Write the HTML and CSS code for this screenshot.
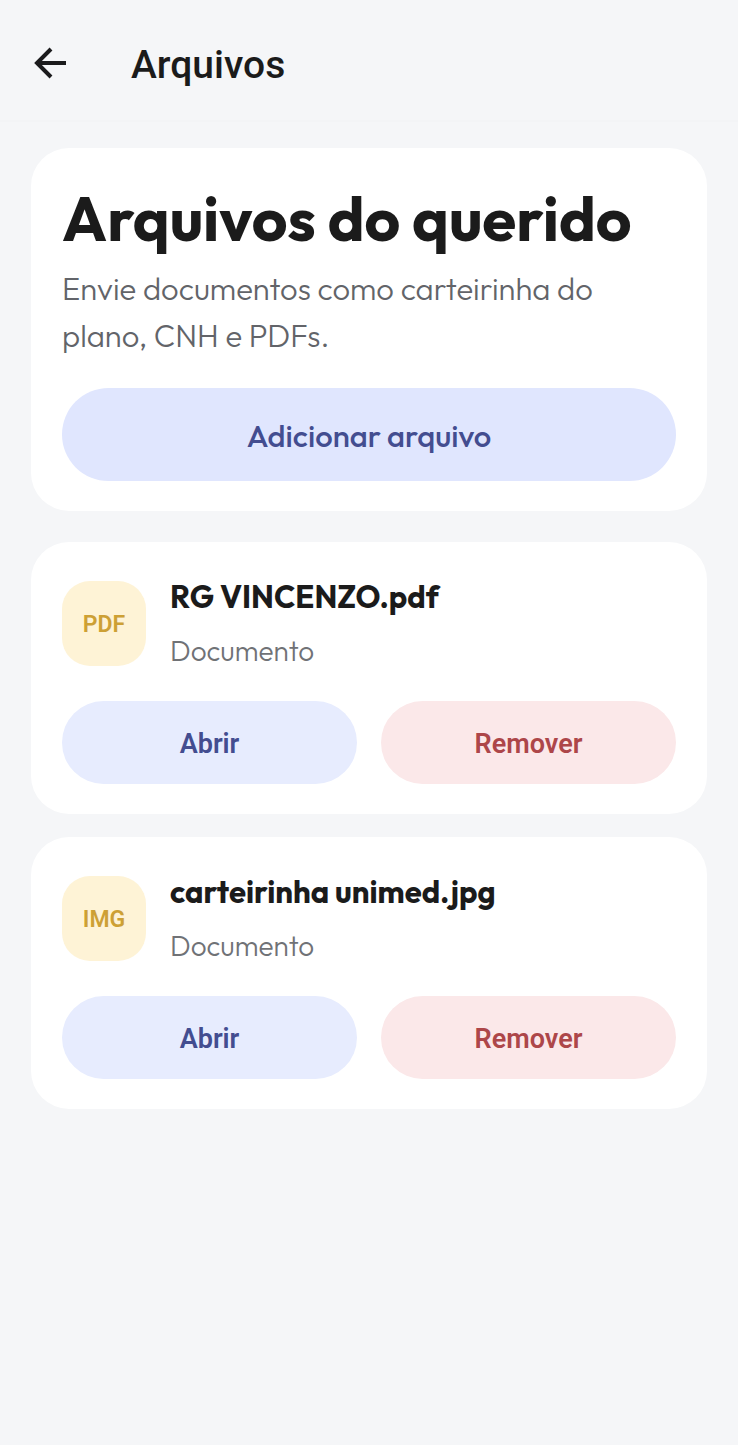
FILE: index.html
```html
<!DOCTYPE html>
<html lang="pt-BR">
<head>
    <meta charset="utf-8">
    <meta name="viewport" content="width=device-width, initial-scale=1">
    <title>Arquivos</title>
    <link rel="stylesheet" href="styles.css">
</head>

<body>
    <header class="topbar">
        <button class="back" type="button" aria-label="Voltar">
            <svg width="34" height="34" viewBox="0 0 34 34" fill="none" stroke="#1b1b1d" stroke-width="4">
                <path d="M32 16H4M17 2L3 16L17 30"/>
            </svg>
        </button>
        <div class="topbar-title">Arquivos</div>
    </header>

    <main>
        <section class="card intro">
            <h1>Arquivos do querido</h1>
            <p>Envie documentos como carteirinha do plano, CNH e PDFs.</p>
            <button class="button add" type="button">Adicionar arquivo</button>
        </section>

        <section class="card">
            <div class="file">
                <div class="badge">PDF</div>
                <div class="file-info">
                    <h2>RG VINCENZO.pdf</h2>
                    <div class="file-type">Documento</div>
                </div>
            </div>
            <div class="actions">
                <button class="button open" type="button">Abrir</button>
                <button class="button remove" type="button">Remover</button>
            </div>
        </section>

        <section class="card">
            <div class="file">
                <div class="badge">IMG</div>
                <div class="file-info">
                    <h2>carteirinha unimed.jpg</h2>
                    <div class="file-type">Documento</div>
                </div>
            </div>
            <div class="actions">
                <button class="button open" type="button">Abrir</button>
                <button class="button remove" type="button">Remover</button>
            </div>
        </section>
    </main>
</body>
</html>
```
FILE: styles.css
```css
* {
    box-sizing: border-box;
}
body {
    margin: 0;
    background-color: #f5f6f8;
    font-family: Outfit, Lato, sans-serif;
    color: #1b1b1b;
}
h1, h2, p {
    margin: 0;
}
.topbar {
    display: flex;
    align-items: center;
    gap: 63px;
    height: 122px;
    padding: 8px 34px 0;
    border-bottom: 2px solid #f3f4f6;
}
.back {
    display: flex;
    padding: 0;
    border: none;
    background: none;
    cursor: pointer;
}
.topbar-title {
    font-family: Roboto, sans-serif;
    font-size: 39px;
    font-weight: 500;
    line-height: 48px;
    padding-top: 2px;
}
main {
    display: flex;
    flex-direction: column;
    gap: 23px;
    padding: 26px 31px;
}
.card {
    padding: 31px 31px 30px;
    border-radius: 38px;
    background-color: white;
}
.intro {
    margin-bottom: 8px;
}
.intro h1 {
    font-size: 62px;
    font-weight: 700;
    line-height: 78px;
}
.intro p {
    padding: 8px 0 29px;
    font-size: 31px;
    font-weight: 300;
    line-height: 47px;
    color: #626469;
}
.button {
    flex: 1;
    height: 83px;
    padding: 2px 0 0;
    border: none;
    border-radius: 48px;
    font-family: Roboto, sans-serif;
    font-size: 27px;
    font-weight: 600;
    cursor: pointer;
}
.add {
    display: block;
    width: 100%;
    height: 93px;
    background-color: #e0e6fe;
    color: #434d90;
    font-family: Outfit, Lato, sans-serif;
    font-size: 31px;
    font-weight: 500;
}
.file {
    display: flex;
    align-items: center;
    gap: 24px;
}
.badge {
    display: flex;
    align-items: center;
    justify-content: center;
    flex-shrink: 0;
    width: 84px;
    height: 85px;
    padding-top: 2px;
    border-radius: 28px;
    background-color: #fef3d6;
    color: #cda035;
    font-family: Roboto, sans-serif;
    font-size: 23px;
    font-weight: 600;
}
.file h2 {
    font-size: 31px;
    font-weight: 700;
    line-height: 48px;
}
.file-type {
    padding-top: 6px;
    font-size: 28px;
    font-weight: 300;
    line-height: 47px;
    color: #707276;
}
.actions {
    display: flex;
    gap: 24px;
    padding-top: 27px;
}
.open {
    background-color: #e7ecfe;
    color: #434d90;
}
.remove {
    background-color: #fbe8e9;
    color: #ad4649;
}
```
